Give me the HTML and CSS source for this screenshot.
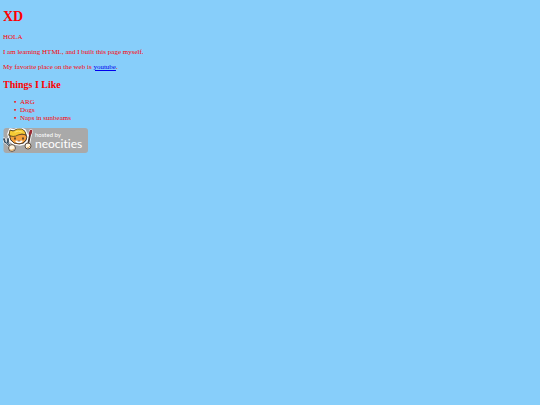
FILE: index.html
```html
<!DOCTYPE html>
<html lang="en">
  <head>
    <meta charset="UTF-8">
    <meta name="viewport" content="width=device-width, initial-scale=1.0">
    <title>XD</title>
    <link rel="stylesheet" href="styles.css">
  </head>
  <body>
    <h1>XD</h1>

    <p>HOLA</p>

    <p>I am learning HTML, and I built this page myself.</p>

    <p>My favorite place on the web is <a href="https://youtube.com">youtube</a>.</p>

    <h2>Things I Like</h2>

    <ul>
      <li>ARG</li>
      <li>Dogs</li>
      <li>Naps in sunbeams</li>
    </ul>

    <a class="badge" href="https://neocities.org" aria-label="hosted by neocities">
      <svg width="85" height="26" viewBox="0 0 85 26">
        <rect x="0.5" y="0" width="84.5" height="25" rx="3" fill="#a9a9a9"/>

        <!-- cat -->
        <g stroke-linejoin="round" stroke-linecap="round">
          <path d="M5 6L7 1L11 2Q17-1 22 2L24 6L25 9L24 13L21 16L17 17L11 16L7 13Z" fill="#3c3028" stroke="#fff" stroke-width="1.6"/>
          <path d="M7 9L8 6L22 6L24 9L23 12L20 15L16 16L11 15L8 12Z" fill="#f5a13c" stroke="#3c3028" stroke-width="0.8"/>
          <path d="M6 7L7 2L10 3Q14 0 19 1Q23 3 23 7Q19 5 15 7Q10 10 6 7Z" fill="#f6cb35" stroke="#4b3b20" stroke-width="0.8"/>
          <path d="M12 4Q15 2 19 4" fill="none" stroke="#fbe477"/>
          <path d="M12 13Q14 12 16 13Q18 12 20 13L18 15L14 15Z" fill="#fff"/>
          <path d="M12 10V11M20 10V11" stroke="#332822" stroke-width="1.4"/>
          <path d="M15 13H17" fill="none" stroke="#703b27" stroke-width="0.7"/>
        </g>

        <!-- wrench and brush -->
        <g fill="none" stroke-linecap="round" stroke-linejoin="round">
          <path d="M1 11L2 14L4 15L5 14L5 11M4 15L9 20" stroke="#fff" stroke-width="3"/>
          <path d="M1 11L2 14L4 15L5 14L5 11M4 15L9 20" stroke="#34485a" stroke-width="1.8"/>
          <path d="M2 13L7 18" stroke="#91a9bb" stroke-width="0.8"/>
          <path d="M28 3L27 7L25 17" stroke="#fff" stroke-width="3.6"/>
          <path d="M28 3L27 7L25 17" stroke="#49352c" stroke-width="1.8"/>
          <path d="M28 3L27 6" stroke="#9c2931" stroke-width="2.6"/>
        </g>
        <circle cx="9" cy="20" r="3.4" fill="#fff5df" stroke="#514134" stroke-width="0.9"/>
        <circle cx="25" cy="18" r="3" fill="#fff5df" stroke="#514134" stroke-width="0.9"/>
        <path d="M7 22Q9 23 11 21M24 20Q26 20 27 18" fill="none" stroke="#e4a654"/>

        <text class="badge-small" x="32" y="9">hosted by</text>
        <text class="badge-name" x="32" y="20">neocities</text>
      </svg>
    </a>
  </body>
</html>
```

FILE: styles.css
```css
body {
  margin: 9px 3px 3px;
  background-color: #87cefa;
  color: red;
  font-family: "Liberation Serif", "Times New Roman", serif;
  font-size: 7px;
  line-height: 8px;
}

h1 {
  margin: 0 0 9px;
  font-size: 14px;
  line-height: 15px;
}

h2 {
  margin: 8px 0;
  font-size: 10px;
  line-height: 11px;
}

p {
  margin: 7px 0;
}

a {
  color: #0000ee;
}

ul {
  margin: 8px 0 6px;
  padding-left: 17px;
}

li::marker {
  content: "•\a0\a0";
  font-weight: bold;
}

.badge svg {
  display: block;
}

.badge text {
  fill: white;
  font-family: Lato, sans-serif;
  font-variant-ligatures: none;
}

.badge-small {
  font-size: 6px;
}

.badge-name {
  font-size: 12px;
}
```
